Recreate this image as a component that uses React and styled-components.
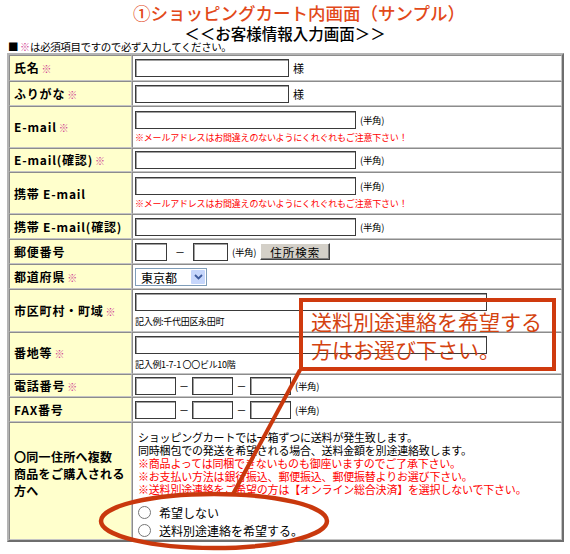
import React from 'react';
import styled, { createGlobalStyle } from 'styled-components';

const GlobalStyle = createGlobalStyle`
  html, body { margin: 0; padding: 0; background: #fff; }
  body { font-family: "Noto Sans CJK JP", "Noto Sans", sans-serif; color: #000; }
`;

const Page = styled.div`
  position: relative;
  width: 570px;
  height: 554px;
  overflow: hidden;
`;

const Title = styled.h1`
  margin: 0;
  padding-left: 28px;
  height: 26px;
  line-height: 26px;
  font-size: 17.5px;
  font-weight: 500;
  color: #e2491a;
  text-align: center;
`;

const SubTitle = styled.h2`
  margin: 0;
  height: 14px;
  line-height: 14px;
  font-size: 15.5px;
  font-weight: 500;
  text-align: center;
`;

const Note = styled.p`
  margin: 0;
  padding-left: 8px;
  height: 13px;
  line-height: 13px;
  font-size: 10.5px;
  letter-spacing: -0.4px;
`;

const Req = styled.span`
  color: #cf3f93;
  font-size: 10px;
  font-weight: 700;
  margin-left: ${(p) => (p.$flush ? 0 : 2)}px;
  letter-spacing: 0;
`;

const FormTable = styled.table`
  margin: 0 0 0 7px;
  width: 557px;
  table-layout: fixed;
  border-collapse: separate;
  border-spacing: 0;
  border: 2px solid;
  border-color: #b4b4b4 #6e6e6e #6e6e6e #b4b4b4;
`;

const Label = styled.th`
  width: 123px;
  height: ${(p) => p.$h}px;
  box-sizing: border-box;
  background: #ffffcc;
  text-align: left;
  vertical-align: middle;
  padding: 0 1px ${(p) => p.$pb || 0}px 4px;
  font-size: 12px;
  font-weight: 700;
  line-height: 17px;
  letter-spacing: ${(p) => (p.$tight ? 0.3 : 0.8)}px;
  white-space: nowrap;
  border: 1px solid;
  border-color: #8c8c8c #c4c4c4 #c4c4c4 #8c8c8c;
`;

const Field = styled.td`
  height: ${(p) => p.$h}px;
  box-sizing: border-box;
  background: #fff;
  vertical-align: ${(p) => (p.$top ? 'top' : 'middle')};
  padding: ${(p) => (p.$top ? '8px 4px 0 5px' : '0 2px')};
  font-size: 11px;
  border: 1px solid;
  border-color: #8c8c8c #c4c4c4 #c4c4c4 #8c8c8c;
`;

const Line = styled.div`
  display: flex;
  align-items: center;
  height: 18px;
`;

const TextInput = styled.input`
  width: ${(p) => p.$w}px;
  height: 18px;
  box-sizing: border-box;
  margin: 0;
  padding: 0 2px;
  border: 1px solid #3a3a3a;
  box-shadow: inset 1px 1px 0 #a0a0a0;
  background: #fff;
  font-size: 11px;
`;

const Suffix = styled.span`
  margin-left: 4px;
  font-size: 9.5px;
  letter-spacing: -0.3px;
`;

const Sama = styled.span`
  margin-left: 4px;
  font-size: 11px;
`;

const Warn = styled.div`
  margin-top: 3px;
  color: #ff0000;
  font-size: 9px;
  line-height: 12px;
  letter-spacing: -0.2px;
`;

const Example = styled.div`
  margin-top: 5px;
  font-size: 9px;
  line-height: 12px;
  letter-spacing: -0.3px;
`;

const Dash = styled.span`
  display: inline-block;
  width: ${(p) => p.$w}px;
  text-align: center;
  font-size: 10px;
`;

const SearchButton = styled.button`
  margin-left: 4px;
  width: 70px;
  height: 17px;
  padding: 0;
  background: #d4d0c8;
  border: 1px solid;
  border-color: #fff #404040 #404040 #fff;
  box-shadow: inset -1px -1px 0 #808080;
  font-family: inherit;
  font-size: 11.5px;
  line-height: 14px;
  letter-spacing: 1px;
  color: #000;
`;

const SelectWrap = styled.div`
  display: inline-flex;
  align-items: center;
  width: 72px;
  height: 18px;
  box-sizing: border-box;
  border: 1px solid #7f9db9;
  background: #fff;
`;

const Select = styled.select`
  appearance: none;
  flex: 1;
  min-width: 0;
  height: 100%;
  border: none;
  margin: 0;
  padding: 0 0 0 5px;
  background: transparent;
  font-family: inherit;
  font-size: 12px;
  color: #000;
  outline: none;
`;

const ArrowBox = styled.span`
  display: flex;
  align-items: center;
  justify-content: center;
  width: 14px;
  height: 14px;
  margin-right: 1px;
  background: #c6d6fb;
  border-radius: 1px;
`;

const Info = styled.div`
  font-size: 11px;
  line-height: 13px;
  letter-spacing: -0.2px;
  white-space: nowrap;
`;

const Red = styled.span`
  color: #ff0000;
`;

const Radios = styled.div`
  margin-top: 7px;
`;

const RadioRow = styled.label`
  display: flex;
  align-items: center;
  height: 18px;
  font-size: 12px;
`;

const Radio = styled.input`
  width: 13px;
  height: 13px;
  margin: 0 8px 0 0;
`;

const Callout = styled.div`
  position: absolute;
  left: 299px;
  top: 298px;
  width: 257px;
  height: 73px;
  box-sizing: border-box;
  border: 4px solid #cf3a0e;
  padding: 5px 0 0 8px;
  color: #d4420f;
  font-size: 21px;
  line-height: 28px;
`;

const Annotation = styled.svg`
  position: absolute;
  left: 0;
  top: 0;
  pointer-events: none;
`;

const Chevron = () => (
  <svg width="9" height="6" viewBox="0 0 9 6">
    <path d="M1 1 L4.5 4.5 L8 1" fill="none" stroke="#3d5a9c" strokeWidth="1.8" />
  </svg>
);

export default function App() {
  return (
    <Page>
      <GlobalStyle />
      <Title>①ショッピングカート内画面（サンプル）</Title>
      <SubTitle>＜＜お客様情報入力画面＞＞</SubTitle>
      <Note>
        ■ <Req $flush>※</Req>は必須項目ですので必ず入力してください。
      </Note>
      <FormTable>
        <tbody>
          <tr>
            <Label $h={26}>氏名<Req>※</Req></Label>
            <Field $h={26}>
              <Line><TextInput $w={154} /><Sama>様</Sama></Line>
            </Field>
          </tr>
          <tr>
            <Label $h={25}>ふりがな<Req>※</Req></Label>
            <Field $h={25}>
              <Line><TextInput $w={154} /><Sama>様</Sama></Line>
            </Field>
          </tr>
          <tr>
            <Label $h={42}>E-mail<Req>※</Req></Label>
            <Field $h={42}>
              <Line><TextInput $w={221} /><Suffix>(半角)</Suffix></Line>
              <Warn>※メールアドレスはお間違えのないようにくれぐれもご注意下さい！</Warn>
            </Field>
          </tr>
          <tr>
            <Label $h={24}>E-mail(確認)<Req>※</Req></Label>
            <Field $h={24}>
              <Line><TextInput $w={221} /><Suffix>(半角)</Suffix></Line>
            </Field>
          </tr>
          <tr>
            <Label $h={42}>携帯 E-mail</Label>
            <Field $h={42}>
              <Line><TextInput $w={221} /><Suffix>(半角)</Suffix></Line>
              <Warn>※メールアドレスはお間違えのないようにくれぐれもご注意下さい！</Warn>
            </Field>
          </tr>
          <tr>
            <Label $h={25}>携帯 E-mail(確認)</Label>
            <Field $h={25}>
              <Line><TextInput $w={221} /><Suffix>(半角)</Suffix></Line>
            </Field>
          </tr>
          <tr>
            <Label $h={25}>郵便番号</Label>
            <Field $h={25}>
              <Line>
                <TextInput $w={32} />
                <Dash $w={26}>－</Dash>
                <TextInput $w={35} />
                <Suffix>(半角)</Suffix>
                <SearchButton type="button">住所検索</SearchButton>
              </Line>
            </Field>
          </tr>
          <tr>
            <Label $h={25}>都道府県<Req>※</Req></Label>
            <Field $h={25}>
              <Line>
                <SelectWrap>
                  <Select defaultValue="東京都">
                    <option>東京都</option>
                  </Select>
                  <ArrowBox><Chevron /></ArrowBox>
                </SelectWrap>
              </Line>
            </Field>
          </tr>
          <tr>
            <Label $h={43}>市区町村・町域<Req>※</Req></Label>
            <Field $h={43}>
              <Line><TextInput $w={352} /></Line>
              <Example>記入例:千代田区永田町</Example>
            </Field>
          </tr>
          <tr>
            <Label $h={42}>番地等<Req>※</Req></Label>
            <Field $h={42}>
              <Line><TextInput $w={352} /></Line>
              <Example>記入例1-7-1 〇〇ビル10階</Example>
            </Field>
          </tr>
          <tr>
            <Label $h={23}>電話番号<Req>※</Req></Label>
            <Field $h={23}>
              <Line>
                <TextInput $w={41} />
                <Dash $w={16}>－</Dash>
                <TextInput $w={41} />
                <Dash $w={17}>－</Dash>
                <TextInput $w={41} />
                <Suffix>(半角)</Suffix>
              </Line>
            </Field>
          </tr>
          <tr>
            <Label $h={25}>FAX番号</Label>
            <Field $h={25}>
              <Line>
                <TextInput $w={41} />
                <Dash $w={16}>－</Dash>
                <TextInput $w={41} />
                <Dash $w={17}>－</Dash>
                <TextInput $w={41} />
                <Suffix>(半角)</Suffix>
              </Line>
            </Field>
          </tr>
          <tr>
            <Label $h={118} $pb={16} $tight>
              〇同一住所へ複数<br />商品をご購入される<br />方へ
            </Label>
            <Field $h={118} $top>
              <Info>
                ショッピングカートでは一箱ずつに送料が発生致します。<br />
                同時梱包での発送を希望される場合、送料金額を別途連絡致します。<br />
                <Red>※商品よっては同梱できないものも御座いますのでご了承下さい。</Red><br />
                <Red>※お支払い方法は銀行振込、郵便振込、郵便振替よりお選び下さい。</Red><br />
                <Red>※送料別途連絡をご希望の方は【オンライン総合決済】を選択しないで下さい。</Red>
              </Info>
              <Radios>
                <RadioRow><Radio type="radio" name="ship" />希望しない</RadioRow>
                <RadioRow><Radio type="radio" name="ship" />送料別途連絡を希望する。</RadioRow>
              </Radios>
            </Field>
          </tr>
        </tbody>
      </FormTable>

      <Callout>送料別途連絡を希望する<br />方はお選び下さい。</Callout>
      <Annotation width="570" height="554" viewBox="0 0 570 554">
        <line x1="300" y1="370" x2="233" y2="494" stroke="#c9380d" strokeWidth="4" />
        <ellipse cx="214" cy="521" rx="113" ry="27" fill="none" stroke="#c9380d" strokeWidth="4.5" />
      </Annotation>
    </Page>
  );
}
